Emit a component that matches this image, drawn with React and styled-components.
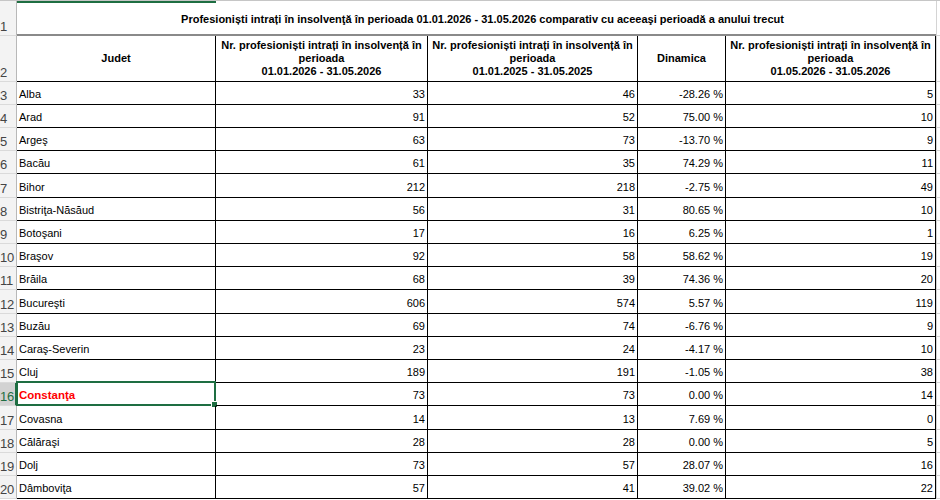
import React from 'react';
import styled, { createGlobalStyle, css } from 'styled-components';

const rows = [
  ['Alba', 33, 46, '-28.26 %', 5],
  ['Arad', 91, 52, '75.00 %', 10],
  ['Argeş', 63, 73, '-13.70 %', 9],
  ['Bacău', 61, 35, '74.29 %', 11],
  ['Bihor', 212, 218, '-2.75 %', 49],
  ['Bistriţa-Năsăud', 56, 31, '80.65 %', 10],
  ['Botoşani', 17, 16, '6.25 %', 1],
  ['Braşov', 92, 58, '58.62 %', 19],
  ['Brăila', 68, 39, '74.36 %', 20],
  ['Bucureşti', 606, 574, '5.57 %', 119],
  ['Buzău', 69, 74, '-6.76 %', 9],
  ['Caraş-Severin', 23, 24, '-4.17 %', 10],
  ['Cluj', 189, 191, '-1.05 %', 38],
  ['Constanţa', 73, 73, '0.00 %', 14],
  ['Covasna', 14, 13, '7.69 %', 0],
  ['Călăraşi', 28, 28, '0.00 %', 5],
  ['Dolj', 73, 57, '28.07 %', 16],
  ['Dâmboviţa', 57, 41, '39.02 %', 22],
];

const SELECTED_ROW = 16;

const GlobalStyle = createGlobalStyle`
  html, body {
    margin: 0;
    padding: 0;
    background: #fff;
  }
  body {
    font-family: 'Liberation Sans', Arial, sans-serif;
    color: #000;
  }
`;

const Sheet = styled.div`
  width: 940px;
  height: 500px;
  overflow: hidden;
  background: #fff;
  border-top: 1px solid #c6c6c6;
  box-sizing: border-box;
`;

const Row = styled.div`
  display: grid;
  grid-template-columns: 17px 199px 212px 210px 88px 210px 1fr;
  height: ${({ height }) => height}px;
`;

const RowHead = styled.div`
  background: ${({ active }) => (active ? '#d2d2d2' : '#f3f3f3')};
  color: ${({ active }) => (active ? '#1e6e42' : '#444')};
  border-right: ${({ active }) => (active ? '2px solid #1e6e42' : '1px solid #b8b8b8')};
  border-bottom: 1px solid #dadada;
  box-sizing: border-box;
  font-size: 13px;
  display: flex;
  align-items: flex-end;
  padding: 0 0 1px 0;
  letter-spacing: -0.3px;
`;

const TitleCell = styled.div`
  grid-column: 2 / 7;
  display: flex;
  align-items: center;
  justify-content: center;
  padding-left: 12px;
  font-size: 11px;
  font-weight: bold;
  border-bottom: 2px solid #8a8a8a;
  border-top: 2px solid transparent;
  box-sizing: border-box;
  ${({ selectedCol }) =>
    selectedCol &&
    css`
      background-image: linear-gradient(#1e6e42, #1e6e42);
      background-size: 199px 2px;
      background-repeat: no-repeat;
      background-position: 0 -2px;
    `}
`;

const Cell = styled.div`
  position: relative;
  border-right: 1px solid #000;
  border-bottom: 1px solid #000;
  box-sizing: border-box;
  font-size: 11px;
  display: flex;
  align-items: flex-end;
  justify-content: ${({ align }) => (align === 'right' ? 'flex-end' : 'flex-start')};
  padding: 0 2px 4px 2px;
  white-space: nowrap;
  ${({ red }) =>
    red &&
    css`
      color: #ff0000;
      font-weight: bold;
      font-size: 11.5px;
    `}
`;

const HeadCell = styled(Cell)`
  justify-content: center;
  align-items: center;
  text-align: center;
  font-weight: bold;
  line-height: 13px;
  padding: 0 4px;
  white-space: normal;
`;

const Spare = styled.div`
  border-bottom: 1px solid #d4d4d4;
  border-left: 1px solid #d4d4d4;
  box-sizing: border-box;
`;

const Selection = styled.div`
  position: absolute;
  left: -1px;
  top: -2px;
  right: -1px;
  bottom: -1px;
  border: 2px solid #1e6e42;
  pointer-events: none;
  &::after {
    content: '';
    position: absolute;
    right: -4px;
    bottom: -4px;
    width: 5px;
    height: 5px;
    background: #1e6e42;
    border: 1px solid #fff;
  }
`;

const heading = (period) => (
  <>
    Nr. profesioniști intrați în insolvență în
    <br />
    perioada
    <br />
    {period}
  </>
);

export default function App() {
  return (
    <>
      <GlobalStyle />
      <Sheet>
        <Row height={35}>
          <RowHead>1</RowHead>
          <TitleCell selectedCol>
            Profesioniști intrați în insolvenţă în perioada 01.01.2026 - 31.05.2026 comparativ cu aceeaşi perioadă a
            anului trecut
          </TitleCell>
          <Spare />
        </Row>
        <Row height={46}>
          <RowHead>2</RowHead>
          <HeadCell>Judet</HeadCell>
          <HeadCell>{heading('01.01.2026 - 31.05.2026')}</HeadCell>
          <HeadCell>{heading('01.01.2025 - 31.05.2025')}</HeadCell>
          <HeadCell>Dinamica</HeadCell>
          <HeadCell>{heading('01.05.2026 - 31.05.2026')}</HeadCell>
          <Spare />
        </Row>
        {rows.map(([judet, a, b, dyn, c], i) => {
          const n = i + 3;
          const active = n === SELECTED_ROW;
          return (
            <Row key={judet} height={i % 5 === 4 ? 24 : 23}>
              <RowHead active={active}>{n}</RowHead>
              <Cell red={active}>
                {judet}
                {active && <Selection />}
              </Cell>
              <Cell align="right">{a}</Cell>
              <Cell align="right">{b}</Cell>
              <Cell align="right">{dyn}</Cell>
              <Cell align="right">{c}</Cell>
              <Spare />
            </Row>
          );
        })}
      </Sheet>
    </>
  );
}
